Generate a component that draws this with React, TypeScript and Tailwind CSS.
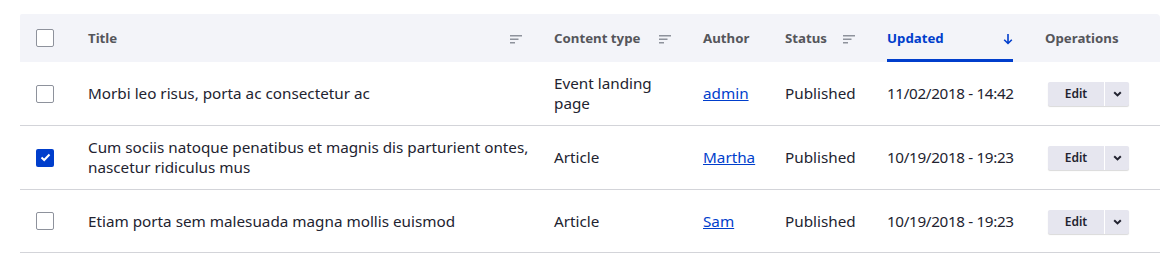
import React from 'react';

type Row = {
  title: string;
  type: string;
  author: string;
  status: string;
  updated: string;
  checked: boolean;
};

const rows: Row[] = [
  { title: 'Morbi leo risus, porta ac consectetur ac', type: 'Event landing page', author: 'admin', status: 'Published', updated: '11/02/2018 - 14:42', checked: false },
  { title: 'Cum sociis natoque penatibus et magnis dis parturient ontes, nascetur ridiculus mus', type: 'Article', author: 'Martha', status: 'Published', updated: '10/19/2018 - 19:23', checked: true },
  { title: 'Etiam porta sem malesuada magna mollis euismod', type: 'Article', author: 'Sam', status: 'Published', updated: '10/19/2018 - 19:23', checked: false },
];

function SortIcon() {
  return (
    <svg width="12" height="10" viewBox="0 0 12 10" className="shrink-0">
      <rect x="0" y="1" width="12" height="1.5" fill="#8e929c" />
      <rect x="0" y="4.5" width="8.5" height="1.5" fill="#8e929c" />
      <rect x="0" y="8" width="5" height="1.5" fill="#8e929c" />
    </svg>
  );
}

function Checkbox({ checked }: { checked: boolean }) {
  if (checked) {
    return (
      <span className="flex h-[18px] w-[18px] items-center justify-center rounded-[2px] bg-[#003ecc]">
        <svg width="11" height="9" viewBox="0 0 11 9">
          <path d="M1.5 4.5 L4.2 7 L9.5 1.5" fill="none" stroke="#fff" strokeWidth="2" />
        </svg>
      </span>
    );
  }
  return <span className="block h-[18px] w-[18px] rounded-[2px] border border-[#8e929c] bg-white" />;
}

function EditButton() {
  return (
    <div className="flex h-6 w-[81px] overflow-hidden rounded-[2px] bg-[#e6e6ef] shadow-[0_1px_1px_rgba(0,0,0,0.15)]">
      <span className="flex w-[56px] items-center justify-center text-[12px] font-semibold text-[#222330]">Edit</span>
      <span className="w-px bg-white" />
      <span className="flex flex-1 items-center justify-center">
        <svg width="9" height="6" viewBox="0 0 9 6">
          <path d="M1.2 1.2 L4.5 4.4 L7.8 1.2" fill="none" stroke="#222330" strokeWidth="2" />
        </svg>
      </span>
    </div>
  );
}

export default function App() {
  return (
    <div className="bg-white pt-[14px] px-5 font-['Noto_Sans',sans-serif] text-[#222330]">
      <table className="w-[1140px] table-fixed border-collapse">
        <colgroup>
          <col className="w-[52px]" />
          <col className="w-[466px]" />
          <col className="w-[149px]" />
          <col className="w-[82px]" />
          <col className="w-[102px]" />
          <col className="w-[158px]" />
          <col className="w-[131px]" />
        </colgroup>
        <thead>
          <tr className="h-12 bg-[#f3f4f9] text-left text-[13.25px] font-semibold text-[#55565b]">
            <th className="rounded-tl-[2px] pl-4 pr-0">
              <Checkbox checked={false} />
            </th>
            <th className="px-4 pt-[2px]">
              <div className="flex items-center justify-between">
                <span>Title</span>
                <SortIcon />
              </div>
            </th>
            <th className="px-4 pt-[2px]">
              <div className="flex items-center justify-between">
                <span>Content type</span>
                <SortIcon />
              </div>
            </th>
            <th className="px-4 pt-[2px]">Author</th>
            <th className="px-4 pt-[2px]">
              <div className="flex items-center justify-between">
                <span>Status</span>
                <SortIcon />
              </div>
            </th>
            <th className="relative px-4 pt-[2px] text-[#003ecc]">
              <div className="flex items-center justify-between">
                <span>Updated</span>
                <svg width="10" height="12" viewBox="0 0 10 12">
                  <path d="M5 1 V10.5 M1.2 6.8 L5 10.5 L8.8 6.8" fill="none" stroke="#003ecc" strokeWidth="1.6" />
                </svg>
              </div>
              <span className="absolute bottom-0 left-4 right-4 h-[3px] bg-[#003ecc]" />
            </th>
            <th className="rounded-tr-[4px] px-4 pt-[2px]">Operations</th>
          </tr>
        </thead>
        <tbody className="text-[15.25px] leading-5">
          {rows.map((r) => (
            <tr key={r.title} className="h-[63px] border-b border-[#d3d4d9]">
              <td className="pl-4">
                <Checkbox checked={r.checked} />
              </td>
              <td className="pl-4 pr-0 pt-[11px] pb-[12px]">{r.title}</td>
              <td className="px-4 pt-[11px] pb-[12px]">{r.type}</td>
              <td className="px-4 pt-[11px] pb-[12px]">
                <a href="#" className="text-[#003ecc] underline">{r.author}</a>
              </td>
              <td className="px-4 pt-[11px] pb-[12px]">{r.status}</td>
              <td className="whitespace-nowrap px-4 pt-[11px] pb-[12px] tracking-[-0.35px]">{r.updated}</td>
              <td className="pl-[19px] pt-[13px] pb-3">
                <EditButton />
              </td>
            </tr>
          ))}
        </tbody>
      </table>
    </div>
  );
}
